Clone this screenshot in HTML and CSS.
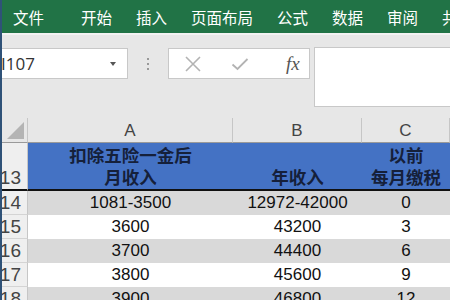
FILE: index.html
```html
<!DOCTYPE html>
<html lang="zh-CN">
<head>
  <meta charset="UTF-8">
  <title>个税对照表</title>
  <link rel="stylesheet" href="styles.css">
</head>
<body>
  <div class="app">
    <!-- Ribbon tabs -->
    <nav class="ribbon">
      <span class="tab tab-first">文件</span>
      <span class="tab">开始</span>
      <span class="tab">插入</span>
      <span class="tab">页面布局</span>
      <span class="tab">公式</span>
      <span class="tab">数据</span>
      <span class="tab">审阅</span>
      <span class="tab">共</span>
    </nav>

    <!-- Formula bar -->
    <div class="formula-area">
      <div class="namebox">
        <span class="name">I107</span>
        <span class="caret"></span>
      </div>
      <div class="grip"><i></i><i></i><i></i></div>
      <div class="fbuttons">
        <svg class="ficon" width="18" height="18" viewBox="0 0 18 18"><path d="M2 2 L16 16 M16 2 L2 16" stroke="#b3b3b3" stroke-width="1.6" fill="none"/></svg>
        <svg class="ficon" width="18" height="18" viewBox="0 0 18 18"><path d="M1.5 9.5 L6.5 14 L16.5 4" stroke="#b3b3b3" stroke-width="1.8" fill="none"/></svg>
        <span class="fx">fx</span>
      </div>
      <div class="finput"></div>
    </div>

    <!-- Sheet -->
    <div class="sheet">
      <div class="corner"><span class="tri"></span></div>
      <div class="colhead">A</div>
      <div class="colhead">B</div>
      <div class="colhead">C</div>

      <div class="rowhead tall">13</div>
      <div class="hcell">扣除五险一金后<br>月收入</div>
      <div class="hcell">年收入</div>
      <div class="hcell">以前<br>每月缴税</div>

      <div class="rowhead">14</div>
      <div class="cell shade">1081-3500</div>
      <div class="cell shade">12972-42000</div>
      <div class="cell shade">0</div>

      <div class="rowhead">15</div>
      <div class="cell">3600</div>
      <div class="cell">43200</div>
      <div class="cell">3</div>

      <div class="rowhead">16</div>
      <div class="cell shade">3700</div>
      <div class="cell shade">44400</div>
      <div class="cell shade">6</div>

      <div class="rowhead">17</div>
      <div class="cell">3800</div>
      <div class="cell">45600</div>
      <div class="cell">9</div>

      <div class="rowhead">18</div>
      <div class="cell shade">3900</div>
      <div class="cell shade">46800</div>
      <div class="cell shade">12</div>
    </div>
  </div>
</body>
</html>
```

FILE: styles.css
```css
* {
  box-sizing: border-box;
}

body {
  margin: 0;
  font-family: "Liberation Sans", Arial, sans-serif;
  overflow: hidden;
}

.app {
  width: 450px;
  height: 300px;
  border-left: 2px solid #2f5278;
  background: #e7e7e7;
  overflow: hidden;
}

/* Ribbon */
.ribbon {
  height: 35px;
  background: #217346;
  border-bottom: 2px solid #f2f2f2;
  display: flex;
  align-items: center;
  padding-left: 11px;
  gap: 24px;
  color: #fff;
  font-family: "Noto Sans CJK SC", sans-serif;
  font-size: 15.5px;
  white-space: nowrap;
}

.tab-first {
  margin-right: 13px;
}

/* Formula bar */
.formula-area {
  height: 83px;
  display: flex;
  align-items: flex-start;
  padding-top: 13px;
}

.namebox {
  width: 126px;
  height: 31px;
  background: #fff;
  border: 1px solid #c8c8c8;
  border-left: none;
  display: flex;
  align-items: center;
  justify-content: space-between;
}

.name {
  font-family: "Open Sans", sans-serif;
  font-size: 17px;
  color: #333;
  margin-left: -1px;
}

.caret {
  width: 0;
  height: 0;
  border-left: 3px solid transparent;
  border-right: 3px solid transparent;
  border-top: 4px solid #555;
  margin-right: 11px;
}

.grip {
  width: 40px;
  height: 31px;
  display: flex;
  flex-direction: column;
  align-items: center;
  justify-content: center;
  gap: 3px;
}

.grip i {
  width: 2px;
  height: 2px;
  background: #999;
}

.fbuttons {
  width: 142px;
  height: 31px;
  margin-right: 4px;
  background: #fff;
  border: 1px solid #c8c8c8;
  display: flex;
  align-items: center;
  padding-left: 15px;
  gap: 29px;
}

.fx {
  font-family: "Liberation Serif", serif;
  font-style: italic;
  font-size: 19px;
  color: #555;
  margin-left: 8px;
}

.finput {
  flex: 1;
  height: 60px;
  margin-top: -1px;
  background: #fff;
  border: 1px solid #c8c8c8;
  border-right: none;
}

/* Sheet */
.sheet {
  display: grid;
  grid-template-columns: 26px 205px 129px 88px;
  grid-template-rows: 25px 48px 24px 24px 24px 24px 24px;
}

.corner {
  background: #e7e7e7;
  border-right: 1px solid #c6c6c6;
  border-bottom: 1px solid #9a9a9a;
  position: relative;
}

.tri {
  position: absolute;
  right: 3px;
  bottom: 3px;
  width: 0;
  height: 0;
  border-left: 17px solid transparent;
  border-bottom: 17px solid #b4b4b4;
}

.colhead {
  background: #e7e7e7;
  border-right: 1px solid #c6c6c6;
  border-bottom: 1px solid #9a9a9a;
  display: flex;
  align-items: center;
  justify-content: center;
  padding-top: 2px;
  font-size: 17px;
  color: #444;
}

.rowhead {
  background: #efefef;
  border-right: 1px solid #c6c6c6;
  border-bottom: 1px solid #d4d4d4;
  font-size: 19px;
  color: #444;
  display: flex;
  align-items: flex-end;
  justify-content: flex-end;
  padding-right: 6px;
  overflow: hidden;
  line-height: 23px;
}

.rowhead.tall {
  border-bottom: 2px solid #111;
}

.hcell {
  background: #4472c4;
  border-bottom: 2px solid #111;
  font-family: "Noto Sans CJK SC", sans-serif;
  font-weight: 700;
  font-size: 17.5px;
  line-height: 22px;
  color: #15203a;
  text-align: center;
  display: flex;
  align-items: flex-end;
  justify-content: center;
  padding-bottom: 1px;
  white-space: nowrap;
}

.cell {
  background: #fff;
  font-size: 17px;
  color: #111;
  display: flex;
  align-items: center;
  justify-content: center;
  white-space: nowrap;
}

.cell.shade {
  background: #d9d9d9;
}
```
